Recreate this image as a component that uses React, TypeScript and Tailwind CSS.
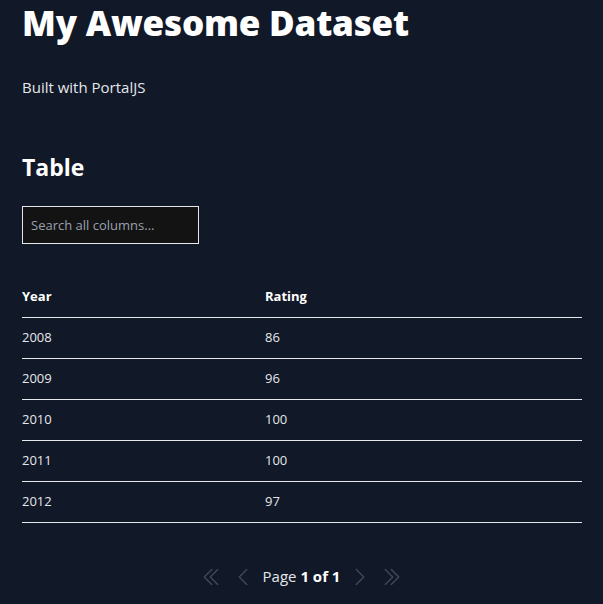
const rows = [
  { year: '2008', rating: '86' },
  { year: '2009', rating: '96' },
  { year: '2010', rating: '100' },
  { year: '2011', rating: '100' },
  { year: '2012', rating: '97' },
];

const PageIcon: React.FC<{ d: string }> = ({ d }) => (
  <svg
    width="24"
    height="24"
    viewBox="0 0 24 24"
    fill="none"
    stroke="currentColor"
    strokeWidth={1.5}
    strokeLinecap="round"
    strokeLinejoin="round"
  >
    <path d={d} />
  </svg>
);

const App: React.FC = () => {
  return (
    <div className="min-h-[604px] bg-[#111827] px-[22px] font-['Open_Sans',sans-serif] text-white">
      {/* Header */}
      <h1 className="pt-[3px] text-[35px] leading-[40px] font-extrabold tracking-[-0.2px]">
        My Awesome Dataset
      </h1>
      <p className="mt-[33px] text-[15px] leading-[22px] text-gray-200">Built with PortalJS</p>

      {/* Table section */}
      <h2 className="mt-[53px] text-[23px] leading-[32px] font-bold">Table</h2>
      <input
        className="mt-[23px] block h-[38px] w-[177px] border border-gray-200 bg-[#131313] px-[8px] text-[13px] text-gray-300 placeholder:text-gray-400 outline-none"
        placeholder="Search all columns..."
      />

      <table className="mt-[33px] w-[560px] text-left text-[13px]">
        <thead>
          <tr className="border-b border-gray-200">
            <th className="h-[40px] w-[243px] align-middle font-bold">Year</th>
            <th className="h-[40px] align-middle font-bold">Rating</th>
          </tr>
        </thead>
        <tbody>
          {rows.map((row, i) => (
            <tr key={i} className="border-b border-gray-200 text-gray-200">
              <td className="h-[41px] align-middle">{row.year}</td>
              <td className="h-[41px] align-middle">{row.rating}</td>
            </tr>
          ))}
        </tbody>
      </table>

      {/* Pagination */}
      <div className="mt-[42px] flex items-center justify-center gap-2 text-[#3f4856]">
        <PageIcon d="M18.75 19.5l-7.5-7.5 7.5-7.5m-6 15L5.25 12l7.5-7.5" />
        <PageIcon d="M15.75 19.5L8.25 12l7.5-7.5" />
        <span className="text-[15px] text-gray-200">
          Page <strong className="font-bold text-white">1 of 1</strong>
        </span>
        <PageIcon d="M8.25 4.5l7.5 7.5-7.5 7.5" />
        <PageIcon d="M11.25 4.5l7.5 7.5-7.5 7.5m-6-15l7.5 7.5-7.5 7.5" />
      </div>
    </div>
  );
};

export default App;
